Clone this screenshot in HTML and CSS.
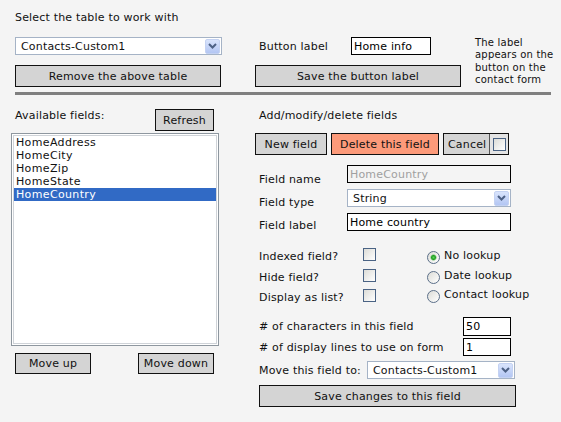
FILE: index.html
```html
<!DOCTYPE html>
<html>
<head>
<meta charset="utf-8">
<link rel="stylesheet" href="styles.css">
</head>
<body>
<div class="page">
  <div class="top">
    <div class="title">Select the table to work with</div>
    <div class="top-row">
      <div class="col-left">
        <div class="select table-select">
          <span class="select-text">Contacts-Custom1</span>
          <span class="arrow"><svg width="9" height="6" viewBox="0 0 9 6"><polyline points="1,1 4.5,4.5 8,1" fill="none" stroke="#4d6185" stroke-width="2"/></svg></span>
        </div>
        <button class="btn btn-remove">Remove the above table</button>
      </div>
      <div class="col-mid">
        <div class="label-row">
          <span class="lbl lbl-button">Button label</span>
          <input class="txt txt-label" type="text" value="Home info">
        </div>
        <button class="btn btn-save-label">Save the button label</button>
      </div>
      <div class="note">The label<br>appears on the<br>button on the<br>contact form</div>
    </div>
  </div>

  <div class="divider"></div>

  <div class="bottom">
    <div class="left">
      <div class="avail-head">
        <span class="lbl">Available fields:</span>
        <button class="btn btn-refresh">Refresh</button>
      </div>
      <div class="listbox">
        <div class="listbox-inner">
          <div class="item">HomeAddress</div>
          <div class="item">HomeCity</div>
          <div class="item">HomeZip</div>
          <div class="item">HomeState</div>
          <div class="item selected">HomeCountry</div>
        </div>
      </div>
      <div class="move-row">
        <button class="btn btn-move">Move up</button>
        <button class="btn btn-move">Move down</button>
      </div>
    </div>

    <div class="right">
      <div class="lbl head">Add/modify/delete fields</div>
      <div class="btn-row">
        <button class="btn btn-new">New field</button>
        <button class="btn btn-delete">Delete this field</button>
        <div class="cancel-group">
          <span class="cancel-text">Cancel</span>
          <span class="cancel-check"><input class="cb" type="checkbox"></span>
        </div>
      </div>

      <div class="field-row fr1">
        <span class="lbl field-lbl">Field name</span>
        <input class="txt txt-field disabled" type="text" value="HomeCountry" disabled>
      </div>
      <div class="field-row fr2">
        <span class="lbl field-lbl">Field type</span>
        <div class="select field-select">
          <span class="select-text">String</span>
          <span class="arrow"><svg width="9" height="6" viewBox="0 0 9 6"><polyline points="1,1 4.5,4.5 8,1" fill="none" stroke="#4d6185" stroke-width="2"/></svg></span>
        </div>
      </div>
      <div class="field-row fr3">
        <span class="lbl field-lbl">Field label</span>
        <input class="txt txt-field" type="text" value="Home country">
      </div>

      <div class="checks">
        <div class="check-group">
          <div class="check-row"><span class="lbl check-lbl">Indexed field?</span><input class="cb" type="checkbox"></div>
          <div class="check-row"><span class="lbl check-lbl">Hide field?</span><input class="cb" type="checkbox"></div>
          <div class="check-row last"><span class="lbl check-lbl">Display as list?</span><input class="cb" type="checkbox"></div>
        </div>
        <div class="radio-group">
          <div class="radio-row"><input class="rb" type="radio" name="lk" checked><span class="lbl radio-lbl">No lookup</span></div>
          <div class="radio-row"><input class="rb" type="radio" name="lk"><span class="lbl radio-lbl">Date lookup</span></div>
          <div class="radio-row last"><input class="rb" type="radio" name="lk"><span class="lbl radio-lbl">Contact lookup</span></div>
        </div>
      </div>

      <div class="num-row n1">
        <span class="lbl num-lbl"># of characters in this field</span>
        <input class="txt txt-num h19" type="text" value="50">
      </div>
      <div class="num-row n2">
        <span class="lbl num-lbl"># of display lines to use on form</span>
        <input class="txt txt-num" type="text" value="1">
      </div>

      <div class="move-field-row">
        <span class="lbl move-lbl">Move this field to:</span>
        <div class="select move-select">
          <span class="select-text">Contacts-Custom1</span>
          <span class="arrow"><svg width="9" height="6" viewBox="0 0 9 6"><polyline points="1,1 4.5,4.5 8,1" fill="none" stroke="#4d6185" stroke-width="2"/></svg></span>
        </div>
      </div>

      <button class="btn btn-save-field">Save changes to this field</button>
    </div>
  </div>
</div>
</body>
</html>
```

FILE: styles.css
```css
* { box-sizing: border-box; }

body {
  margin: 0;
  background: #f4f4f4;
  font-family: "DejaVu Sans", Verdana, sans-serif;
  font-size: 11px;
  line-height: 13px;
  letter-spacing: 0.18px;
  color: #111;
}

.page {
  width: 561px;
  height: 422px;
  padding: 11px 0 0 11px;
  overflow: hidden;
}

.lbl { white-space: nowrap; }

/* ---------- buttons ---------- */
.btn {
  display: flex;
  align-items: center;
  justify-content: center;
  margin: 0;
  padding: 0;
  font: inherit;
  letter-spacing: inherit;
  color: #111;
  background: #d4d4d4;
  border: 1px solid #111;
  border-radius: 0;
  height: 22px;
  white-space: nowrap;
}

/* ---------- text inputs ---------- */
.txt {
  font: inherit;
  letter-spacing: inherit;
  color: #000;
  background: #fff;
  border: 1px solid #000;
  border-radius: 0;
  height: 18px;
  padding: 0 2px;
  margin: 0;
  outline: none;
}
.txt.disabled { background: #f4f4f4; color: #a0a0a0; }

/* ---------- select ---------- */
.select {
  display: flex;
  align-items: center;
  justify-content: space-between;
  height: 18px;
  background: #fff;
  border: 1px solid #a5b3c6;
  padding: 0 1px 0 5px;
}
.arrow {
  display: flex;
  align-items: center;
  justify-content: center;
  width: 15px;
  height: 15px;
  border-radius: 2px;
  background: linear-gradient(#d9e4fc, #b3c6f3);
  border: 1px solid #c4d2f2;
}

/* ---------- checkbox / radio ---------- */
.cb {
  appearance: none;
  -webkit-appearance: none;
  width: 13px;
  height: 13px;
  margin: 0;
  border: 1px solid #4a6384;
  border-radius: 0;
  background: linear-gradient(135deg, #dcdcd7, #ffffff);
  flex: none;
}
.rb {
  appearance: none;
  -webkit-appearance: none;
  width: 13px;
  height: 13px;
  margin: 0;
  border: 1px solid #5b6f89;
  border-radius: 50%;
  background: linear-gradient(135deg, #dcdcd7, #ffffff);
  flex: none;
}
.rb:checked {
  background: radial-gradient(circle, #5ccf5c 0, #21a121 2px, rgba(33,161,33,0.3) 3px, transparent 3.5px), linear-gradient(135deg, #dcdcd7, #ffffff);
}

/* ---------- top ---------- */
.top { padding-left: 4px; }
.title { height: 13px; }

.top-row { display: flex; margin-top: 13px; }

.col-left { width: 207px; display: flex; flex-direction: column; }
.table-select { width: 207px; }
.btn-remove { width: 206px; margin-top: 10px; }

.col-mid { width: 206px; margin-left: 33px; display: flex; flex-direction: column; }
.label-row { display: flex; align-items: center; height: 18px; }
.lbl-button { width: 96px; padding-left: 4px; }
.txt-label { width: 80px; }
.btn-save-label { width: 206px; margin-top: 10px; }

.note {
  margin-left: 14px;
  font-size: 10px;
  line-height: 12.3px;
  letter-spacing: 0.2px;
  white-space: nowrap;
}

.divider {
  margin: 5px 0 0 4px;
  width: 536px;
  height: 3px;
  background: #7f7f7f;
}

/* ---------- bottom ---------- */
.bottom { display: flex; margin-top: 14px; }

.left { width: 208px; display: flex; flex-direction: column; }
.avail-head {
  display: flex;
  justify-content: space-between;
  align-items: flex-start;
  height: 22px;
  padding: 0 5px 0 4px;
}
.btn-refresh { width: 59px; }

.listbox {
  margin-top: 2px;
  height: 213px;
  border: 1px solid #8e979f;
  background: #fff;
  padding: 1px;
}
.listbox-inner {
  height: 100%;
  border: 1px solid #cfd3d8;
  background: #fff;
}
.item {
  height: 13px;
  line-height: 13px;
  padding-left: 2px;
  letter-spacing: 0.35px;
}
.item.selected { background: #316ac5; color: #fff; }

.move-row {
  display: flex;
  justify-content: space-between;
  margin-top: 7px;
  padding: 0 5px 0 4px;
}
.btn-move { width: 76px; height: 21px; }

.right { width: 261px; margin-left: 36px; display: flex; flex-direction: column; }
.head { padding-left: 4px; height: 13px; }

.btn-row { display: flex; margin-top: 11px; height: 22px; }
.btn-new { width: 72px; }
.btn-delete { width: 108px; margin-left: 4px; background: #fc9a7a; }
.cancel-group {
  display: flex;
  margin-left: 4px;
  height: 22px;
  border: 1px solid #111;
  background: #d4d4d4;
}
.cancel-text {
  display: flex;
  align-items: center;
  width: 46px;
  padding-left: 4px;
  color: #111;
  border-right: 1px solid #555;
}
.cancel-check {
  display: flex;
  align-items: center;
  padding: 0 2px 0 3px;
  background: #e4e4e4;
}

.field-row { display: flex; align-items: flex-start; height: 18px; margin-top: 6px; }
.field-row.fr1 { margin-top: 10px; }
.field-lbl { width: 92px; padding-left: 4px; }
.fr1 .field-lbl { margin-top: 8px; }
.fr2 .field-lbl { margin-top: 7px; }
.fr3 .field-lbl { margin-top: 6px; }
.txt-field, .field-select { width: 164px; }

.checks { display: flex; margin-top: 17px; height: 55px; }
.check-group { display: flex; flex-direction: column; }
.check-row { display: flex; align-items: flex-start; height: 21px; }
.check-row + .check-row { height: 20px; }
.check-row.last { height: 13px; }
.check-lbl { width: 108px; padding-left: 4px; margin-top: 2px; }

.radio-group { display: flex; flex-direction: column; margin-left: 51px; padding-top: 3px; }
.radio-row { display: flex; align-items: flex-start; height: 20px; }
.radio-row + .radio-row { height: 19px; }
.radio-row.last { height: 13px; }
.radio-lbl { margin-left: 4px; margin-top: -2px; }

.num-row { display: flex; align-items: center; }
.num-row.n1 { margin-top: 14px; }
.num-row.n2 { margin-top: 2px; }
.num-lbl { width: 208px; padding-left: 4px; }
.txt-num { width: 48px; }
.txt-num.h19 { height: 19px; }

.move-field-row { display: flex; align-items: center; margin-top: 5px; }
.move-lbl { width: 112px; padding-left: 4px; }
.move-select { width: 148px; }

.btn-save-field { width: 257px; margin: 6px 0 0 4px; }
```
